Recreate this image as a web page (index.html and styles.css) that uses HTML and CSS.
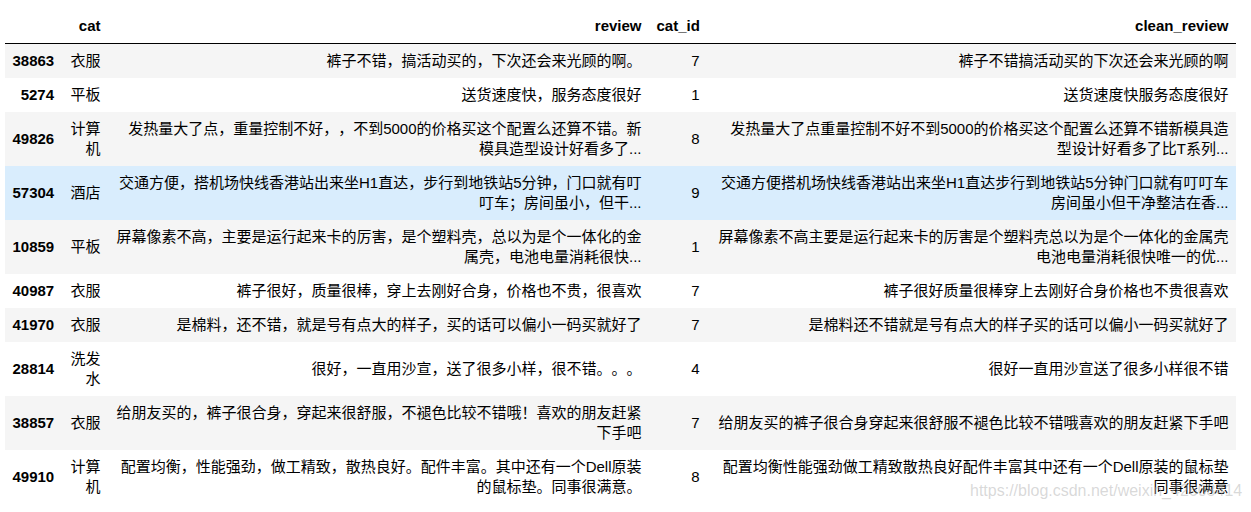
FILE: index.html
```html
<!DOCTYPE html>
<html lang="zh">
<head>
<meta charset="utf-8">
<link rel="stylesheet" href="styles.css">
</head>
<body>
<div class="output">
<table class="dataframe">
  <colgroup>
    <col class="c-idx"><col class="c-cat"><col class="c-review"><col class="c-id"><col class="c-clean">
  </colgroup>
  <thead>
    <tr><th></th><th>cat</th><th>review</th><th>cat_id</th><th>clean_review</th></tr>
  </thead>
  <tbody>
    <tr><th>38863</th><td>衣服</td><td>裤子不错，搞活动买的，下次还会来光顾的啊。</td><td>7</td><td class="clean">裤子不错搞活动买的下次还会来光顾的啊</td></tr>
    <tr><th>5274</th><td>平板</td><td>送货速度快，服务态度很好</td><td>1</td><td class="clean">送货速度快服务态度很好</td></tr>
    <tr><th>49826</th><td>计算机</td><td>发热量大了点，重量控制不好，，不到5000的价格买这个配置么还算不错。新模具造型设计好看多了...</td><td>8</td><td class="clean">发热量大了点重量控制不好不到5000的价格买这个配置么还算不错新模具造型设计好看多了比T系列...</td></tr>
    <tr class="hover"><th>57304</th><td>酒店</td><td>交通方便，搭机场快线香港站出来坐H1直达，步行到地铁站5分钟，门口就有叮叮车；房间虽小，但干...</td><td>9</td><td class="clean">交通方便搭机场快线香港站出来坐H1直达步行到地铁站5分钟门口就有叮叮车房间虽小但干净整洁在香...</td></tr>
    <tr><th>10859</th><td>平板</td><td>屏幕像素不高，主要是运行起来卡的厉害，是个塑料壳，总以为是个一体化的金属壳，电池电量消耗很快...</td><td>1</td><td class="clean">屏幕像素不高主要是运行起来卡的厉害是个塑料壳总以为是个一体化的金属壳电池电量消耗很快唯一的优...</td></tr>
    <tr><th>40987</th><td>衣服</td><td>裤子很好，质量很棒，穿上去刚好合身，价格也不贵，很喜欢</td><td>7</td><td class="clean">裤子很好质量很棒穿上去刚好合身价格也不贵很喜欢</td></tr>
    <tr><th>41970</th><td>衣服</td><td>是棉料，还不错，就是号有点大的样子，买的话可以偏小一码买就好了</td><td>7</td><td class="clean">是棉料还不错就是号有点大的样子买的话可以偏小一码买就好了</td></tr>
    <tr><th>28814</th><td>洗发水</td><td>很好，一直用沙宣，送了很多小样，很不错。。。</td><td>4</td><td class="clean">很好一直用沙宣送了很多小样很不错</td></tr>
    <tr><th>38857</th><td>衣服</td><td>给朋友买的，裤子很合身，穿起来很舒服，不褪色比较不错哦！喜欢的朋友赶紧下手吧</td><td>7</td><td class="clean">给朋友买的裤子很合身穿起来很舒服不褪色比较不错哦喜欢的朋友赶紧下手吧</td></tr>
    <tr><th>49910</th><td>计算机</td><td>配置均衡，性能强劲，做工精致，散热良好。配件丰富。其中还有一个Dell原装的鼠标垫。同事很满意。</td><td>8</td><td class="clean">配置均衡性能强劲做工精致散热良好配件丰富其中还有一个Dell原装的鼠标垫同事很满意</td></tr>
  </tbody>
</table>
<div class="watermark">https://blog.csdn.net/weixin_42608414</div>
</div>
</body>
</html>
```
FILE: styles.css
```css
html, body {
  margin: 0;
  padding: 0;
  background: #fff;
}
.output {
  position: relative;
  padding: 9px 0 0 5px;
  width: 1246px;
  height: 503px;
  overflow: hidden;
}
.dataframe {
  border-collapse: collapse;
  border-spacing: 0;
  table-layout: fixed;
  width: 1231px;
  font-family: "Liberation Sans", Arial, "Noto Sans CJK SC", sans-serif;
  font-size: 15px;
  line-height: 20px;
  color: #000;
  text-spacing-trim: space-all;
}
.c-idx { width: 56.5px; }
.c-cat { width: 46.5px; }
.c-review { width: 541px; }
.c-id { width: 58px; }
.c-clean { width: 529px; }
.dataframe th,
.dataframe td {
  padding: 7px 7.5px;
  text-align: right;
  vertical-align: middle;
  border: none;
  font-weight: normal;
}
.dataframe th {
  font-weight: bold;
}
.dataframe td.clean {
  padding-left: 10.5px;
}
.dataframe thead tr {
  border-bottom: 1px solid #000;
}
.dataframe tbody tr:nth-child(odd) {
  background: #f5f5f5;
}
.dataframe tbody tr.hover {
  background: #d9edfd;
}
.watermark {
  position: absolute;
  left: 970px;
  top: 482px;
  font-family: "Liberation Sans", Arial, sans-serif;
  font-size: 16px;
  color: rgba(170, 170, 170, 0.45);
  white-space: nowrap;
}
```
